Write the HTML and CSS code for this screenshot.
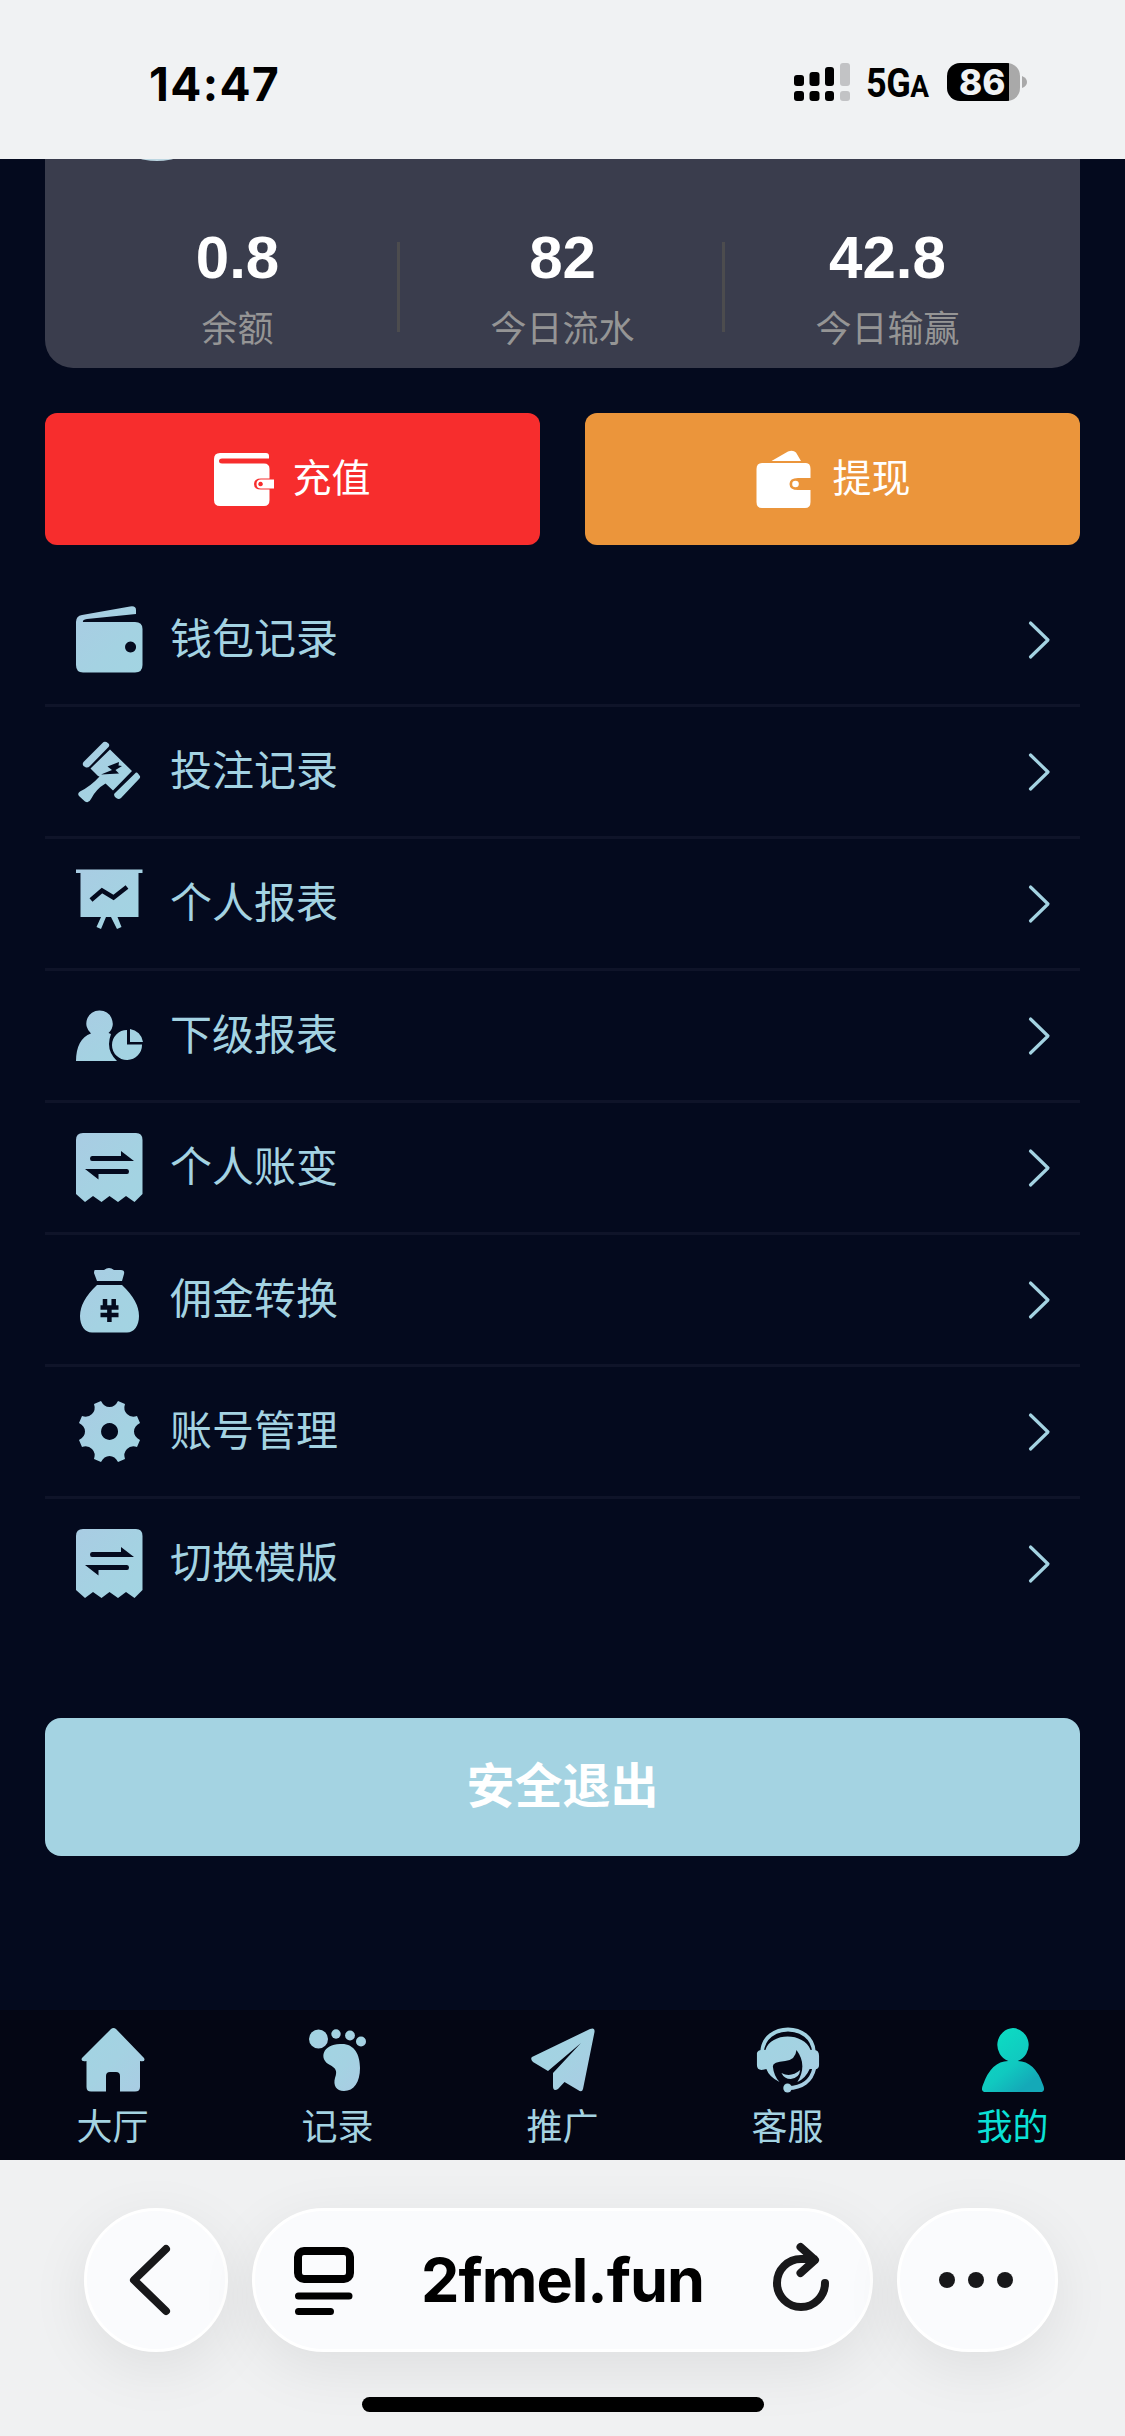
FILE: index.html
```html
<!DOCTYPE html>
<html lang="zh-CN">
<head>
<meta charset="utf-8">
<title>我的</title>
<link rel="stylesheet" href="styles.css">
</head>
<body>
<svg class="defs" width="0" height="0" aria-hidden="true">
  <defs>
    <linearGradient id="ice" x1="0" y1="0" x2="1" y2="1"><stop offset="0" stop-color="#a9cce3"/><stop offset=".6" stop-color="#a4d2e2"/><stop offset="1" stop-color="#a2d4e2"/></linearGradient>
    <linearGradient id="navice" x1="0" y1="0" x2="1" y2="1"><stop offset="0" stop-color="#a2d4e2"/><stop offset=".5" stop-color="#a4d2e2"/><stop offset="1" stop-color="#a9cce3"/></linearGradient>
    <linearGradient id="teal" x1="0" y1="0" x2=".8" y2="1"><stop offset="0" stop-color="#0be3c4"/><stop offset=".6" stop-color="#10c9c0"/><stop offset=".9" stop-color="#14a9b8"/></linearGradient>
    <symbol id="chev" viewBox="0 0 24 40"><path d="M2.5 3 20 20 2.5 37" fill="none" stroke="#a4d3e2" stroke-width="3.2" stroke-linecap="round" stroke-linejoin="round"/></symbol>
    <symbol id="receipt" viewBox="0 0 69 72"><path fill="url(#ice)" fill-rule="evenodd" d="M8 1H61Q67.500 1 67.500 8V62L59.500 70 51 64 43 70 34.500 64 26.500 70 18 64 10 70 1 62V8Q1 1 8 1ZM17 24Q15 24 15 26.500T17 29H59L46 19V24ZM52 37H10L23.500 47.500V42H52Q54 42 54 39.500T52 37Z"/></symbol>
  </defs>
</svg>
<div class="status">
  <div class="time">14:47</div>
  <div class="indicators">
    <svg width="56" height="38" viewBox="0 0 56 38"><g><rect x="0" y="12" width="10" height="11" rx="3"/><rect x="15.500" y="9" width="10" height="14" rx="3"/><rect x="31" y="4" width="9" height="19" rx="3"/><rect x="0" y="28" width="10" height="10" rx="3"/><rect x="15.500" y="28" width="10" height="10" rx="3"/><rect x="31" y="28" width="9" height="10" rx="3"/></g><g fill="#c2c3c5"><rect x="46" y="0" width="10" height="23" rx="3"/><rect x="46" y="28" width="10" height="10" rx="3"/></g></svg>
    <div class="net">5G<span>A</span></div>
    <div class="battery">86</div>
    <svg class="tip" width="6" height="12" viewBox="0 0 6 12"><path d="M0 0Q5 2 5 6T0 12Z" fill="#a9a9a9"/></svg>
  </div>
</div>
<main>
  <section class="card">
    <div class="avatar"></div>
    <div class="stat"><b>0.8</b><span>余额</span></div>
    <div class="stat"><b>82</b><span>今日流水</span></div>
    <div class="stat"><b>42.8</b><span>今日输赢</span></div>
  </section>
  <div class="actions">
    <a class="btn red"><svg width="62" height="56" viewBox="0 0 62 56"><path fill="#fff" d="M6 2H52Q55 2 55 5V7.500H8Q5 7.500 5 10T8 12.500H50Q55.500 12.500 55.500 18V27.500H47Q40 27.500 40 33T47 38.500H55.500V49Q55.500 55 50 55H6Q0 55 0 49V8Q0 2 6 2Z"/><path fill="#fff" fill-rule="evenodd" d="M47 28.500H60V37.500H47Q42.500 37.500 42.500 33T47 28.500ZM46.500 30.700a2.300 2.300 0 1 0 .1 0Z"/></svg><span>充值</span></a>
    <a class="btn orange"><svg width="62" height="60" viewBox="0 0 62 60"><path fill="#fff" d="M17.500 12 34 2.500Q39 .5 42 3.500L47 12ZM8 14H52Q56.500 14 56.500 20V29H44Q35.500 29 35.500 35T44 41H56.500V53Q56.500 59 51 59H8Q2.500 59 2.500 53V20Q2.500 14 8 14Z"/><circle cx="41.500" cy="35" r="3.300" fill="#fff"/></svg><span>提现</span></a>
  </div>
  <nav class="menu">
    <a><svg width="69" height="72" viewBox="0 0 69 72"><path fill="url(#ice)" fill-rule="evenodd" d="M7 11 55 2.500Q61 1.500 61 6V10L12 15Q7 16 8 18H60Q67.500 18 67.500 25V61Q67.500 68.500 60 68.500H8Q1 68.500 1 61V18Q1 12 7 11ZM55.500 37.500a5.500 5.500 0 1 0 .1 0Z"/></svg><span>钱包记录</span><svg class="chev"><use href="#chev"/></svg></a>
    <a><svg width="69" height="72" viewBox="0 0 69 72"><g fill="url(#ice)"><path d="M27.500 7 8.500 26Q7 28 8.500 30L11 31.500Q13 32 15 30L33.500 11Q35 9 33.500 7.500L31.500 6Q29 5 27.500 7ZM61 36.500 39.500 57.500Q38.500 59 40 61L42 62.500Q44 63.500 46 62L64 43Q66 41 64.500 39.500L63 37.500Q62 36 61 36.500ZM35 13.500 15.500 32.500 23 40 24.500 40.500Q16 50 5 55.500 2 57.500 4 60L10 65.500Q13.500 68 16 63 21 53 30.500 47.500L38 54.500 57 35Z"/></g><path fill="#040a1e" d="M44 26 32.500 30.500 37 34 26 38.500 44 37.500 40.500 34 47 30 43.500 29.500Z"/></svg><span>投注记录</span><svg class="chev"><use href="#chev"/></svg></a>
    <a><svg width="69" height="72" viewBox="0 0 69 72"><path fill="url(#ice)" d="M1 1.500H67.500V5H63.500V49H42.500L46.500 59 42 61 36 49H31L26 61 21.500 59 26 49H5.500V5H1Z"/><path d="M16 32 27 22.500 38.500 29.500 52 19" fill="none" stroke="#040a1e" stroke-width="4.500"/></svg><span>个人报表</span><svg class="chev"><use href="#chev"/></svg></a>
    <a><svg width="69" height="72" viewBox="0 0 69 72"><path fill="url(#ice)" d="M24.500 10.500a13 13 0 0 1 9 22.500L36 34Q30 50 42 61H1C1 47 6 37 16 33.500A13 13 0 0 1 24.500 10.500ZM52 30V44.500H67A15 15 0 1 1 52 30ZM55 29A15 15 0 0 1 68 42H55Z"/></svg><span>下级报表</span><svg class="chev"><use href="#chev"/></svg></a>
    <a><svg width="69" height="72"><use href="#receipt"/></svg><span>个人账变</span><svg class="chev"><use href="#chev"/></svg></a>
    <a><svg width="69" height="72" viewBox="0 0 69 72"><path fill="url(#ice)" d="M20 6H29Q34 2 39 6H46Q50 6 49 10L47 17H22L19 9Q19 6 20 6ZM22 21H47Q64 37 64 52C64 62 59 68.500 52 68.500H17C10 68.500 5 62 5 52Q5 37 22 21Z"/><path d="M30 35V44M38.700 35V44M34.400 42V58M25.500 43.500H43.500M25.500 51H43.500" fill="none" stroke="#040a1e" stroke-width="4.500"/></svg><span>佣金转换</span><svg class="chev"><use href="#chev"/></svg></a>
    <a><svg width="69" height="72" viewBox="0 0 69 72"><path fill="url(#ice)" fill-rule="evenodd" d="M19 8 26 5Q29 11 34.500 11T43 5L50 8Q48 14 52 18T62 20L65 27Q59 30 59 35.500T65 44L62 51Q56 49 52 53T50 63L43 66Q40 60 34.500 60T26 66L19 63Q21 57 17 53T7 51L4 44Q10 41 10 35.500T4 27L7 20Q13 22 17 18T19 8ZM34.500 27a8.500 8.500 0 1 0 .1 0Z"/></svg><span>账号管理</span><svg class="chev"><use href="#chev"/></svg></a>
    <a><svg width="69" height="72"><use href="#receipt"/></svg><span>切换模版</span><svg class="chev"><use href="#chev"/></svg></a>
  </nav>
  <a class="logout">安全退出</a>
  <nav class="tabs">
    <a><svg width="66" height="66" viewBox="0 0 66 66"><path fill="url(#navice)" d="M31 2Q33.500 0 36 2L64 31Q66 35 60 34V60Q60 64.500 55 64.500H40V49Q40 45 36 45H30Q26 45 26 49V64.500H11Q6.500 64.500 6.500 60V34Q0 35 2 31Z"/></svg><span>大厅</span></a>
    <a><svg width="66" height="66" viewBox="0 0 66 66"><g fill="url(#navice)"><ellipse cx="13.500" cy="12" rx="9.500" ry="9.500"/><circle cx="31" cy="7" r="4.700"/><circle cx="45" cy="8.500" r="4.900"/><circle cx="56" cy="14.500" r="5"/><path d="M35 17C49 16 55 27 55 41 55 55 49 64 39 64 31 64 28 58 30 51 33 43 30 41 25 38 13 32 18 17 35 17Z"/></g></svg><span>记录</span></a>
    <a><svg width="66" height="66" viewBox="0 0 66 66"><path fill="url(#navice)" d="M2 30 60 2Q65 0 64.500 5L53 62Q52 66 48 63L34.500 55 28 62Q23 65 23 59V46L51 16 18 44 3 35Q0 32 2 30Z"/></svg><span>推广</span></a>
    <a><svg width="64" height="66" viewBox="0 0 68 66" preserveAspectRatio="none"><path d="M6.500 25C8-5 60-5 61.500 25M62 41C59 54 49 61 34 61" fill="none" stroke="url(#navice)" stroke-width="4"/><circle cx="33.500" cy="61" r="4.500" fill="url(#navice)"/><path fill="url(#navice)" d="M1 26Q2 23 6 23H10C16 5 51 5 58 23H62Q67 23 67 29V38Q67 43 61 42H57Q53 51 44 55 55 38 43 23 42 33 31 34 17 35 18 40 19 49 25 55 14 50 11 42 1 45 1 38ZM27 46Q37 51 47 43 46 51 37 52 30 52 27 46Z"/></svg><span>客服</span></a>
    <a class="on"><svg width="64" height="66" viewBox="0 0 68 66" preserveAspectRatio="none"><path fill="url(#teal)" d="M34 1A17.500 17 0 0 1 39 34Q57 34 66 58 69 65 63 65H5Q-1 65 2 58 11 34 29 34A17.500 17 0 0 1 34 1Z"/></svg><span>我的</span></a>
  </nav>
</main>
<footer>
  <div class="bar">
    <div class="pill back"><svg width="44" height="74" viewBox="0 0 44 74"><path d="M38 6 6 37 38 68" fill="none" stroke="#18181a" stroke-width="8" stroke-linecap="round" stroke-linejoin="round"/></svg></div>
    <div class="pill url">
      <svg width="60" height="70" viewBox="0 0 60 70"><rect x="4" y="6" width="52" height="28" rx="6" fill="none" stroke="#000" stroke-width="8"/><path d="M4.500 51H55M4.500 66.500H36.500" stroke="#000" stroke-width="7" stroke-linecap="round"/></svg>
      <span>2fmel.fun</span>
      <svg class="reload" width="58" height="70" viewBox="0 0 58 70"><path d="M30 14A24 24 0 1 0 54 38M29.500 2 44 15 29.500 28M30 14H43" fill="none" stroke="#18181a" stroke-width="8" stroke-linecap="round" stroke-linejoin="round"/></svg>
    </div>
    <div class="pill more"><i></i><i></i><i></i></div>
  </div>
  <div class="home"></div>
</footer>
</body>
</html>
```
FILE: styles.css
```css
* { box-sizing: border-box; }
body { margin: 0; width: 1125px; height: 2436px; overflow: hidden; background: #040a1e; font-family: "Liberation Sans", "Noto Sans CJK SC", sans-serif; display: flex; flex-direction: column; }
svg { display: block; flex: none; }
.defs { position: absolute; }
.status { height: 159px; flex: none; background: #f0f2f3; display: flex; justify-content: space-between; align-items: center; padding: 5px 97px 0 149px; color: #000; }
.time { font: 700 46px/54px Inter, sans-serif; letter-spacing: 1.4px; padding-top: 3px; }
.indicators { display: flex; align-items: center; }
.net { font: 700 40px/38px Roboto, sans-serif; margin: 7px 0 0 16px; width: 81px; white-space: nowrap; letter-spacing: -.5px; transform: scaleX(.9); transform-origin: 0 50%; }
.net span { font-size: 31px; }
.battery { width: 73px; height: 38px; border-radius: 13px; background: linear-gradient(90deg, #000 62px, #a9a9a9 62px); color: #f0f2f3; font: 800 35px/38px Inter, sans-serif; padding-left: 12px; white-space: nowrap; }
.tip { margin-left: 2px; }
main { height: 2001px; flex: none; display: flex; flex-direction: column; }
.card { position: relative; height: 209px; margin: 0 45px; padding: 67px 30px 0; background: #3a3d4d; border-radius: 0 0 28px 28px; overflow: hidden; display: flex; }
.avatar { position: absolute; left: 46px; top: -130px; width: 132px; height: 132px; border-radius: 50%; background: #bcd6e1; }
.stat { width: 325px; display: flex; flex-direction: column; align-items: center; position: relative; }
.stat + .stat::before { content: ""; position: absolute; left: -3px; top: 16px; width: 3px; height: 90px; background: #4c4c4e; }
.stat b { font-size: 60px; line-height: 64px; color: #fff; }
.stat span { font-size: 36px; line-height: 48px; margin-top: 16px; color: #959595; }
.actions { display: flex; gap: 45px; margin: 45px 45px 30px; }
.btn { flex: 1; height: 132px; border-radius: 12px; color: #fff; font-size: 39px; display: flex; align-items: center; justify-content: center; gap: 16px; }
.btn span { padding-bottom: 9px; }
.red { background: #f72d2d; }
.orange { background: #eb953b; }
.menu { margin: 0 45px; }
.menu a { height: 132px; display: flex; align-items: center; padding: 0 28px 0 30px; border-bottom: 3px solid #0f1429; color: #a4d3e2; font-size: 42px; gap: 26px; }
.menu span { padding-bottom: 8px; }
.menu a:last-child { border-color: transparent; }
.chev { width: 24px; height: 40px; margin-left: auto; }
.logout { height: 138px; margin: 87px 45px 0; border-radius: 16px; background: #a4d3e2; color: #fff; font-size: 48px; font-weight: 700; line-height: 138px; text-align: center; }
.tabs { margin-top: auto; height: 150px; background: #040614; display: flex; }
.tabs a { flex: 1; display: flex; flex-direction: column; align-items: center; padding-top: 17px; color: #a4d3e2; font-size: 36px; line-height: 48px; gap: 11px; }
.tabs .on { color: #0be0d6; }
footer { height: 276px; flex: none; background: #f0f1f2; padding-top: 48px; overflow: hidden; }
.bar { display: flex; gap: 24px; margin-left: 84px; }
.pill { height: 144px; border-radius: 72px; background: #fafbfd; border: 3px solid #fff; box-shadow: 0 16px 60px rgba(0, 0, 0, .08); display: flex; align-items: center; justify-content: center; }
.back { width: 144px; padding-right: 12px; }
.url { width: 621px; justify-content: space-between; padding: 0 41px 0 39px; }
.url span { font: 700 61px/70px Inter, sans-serif; letter-spacing: -1px; }
.reload { overflow: visible; }
.more { width: 161px; gap: 13px; padding-right: 4px; }
.more i { width: 16px; height: 16px; border-radius: 50%; background: #18181a; }
.home { width: 402px; height: 15px; margin: 45px 0 0 362px; border-radius: 8px; background: #000; }
```
